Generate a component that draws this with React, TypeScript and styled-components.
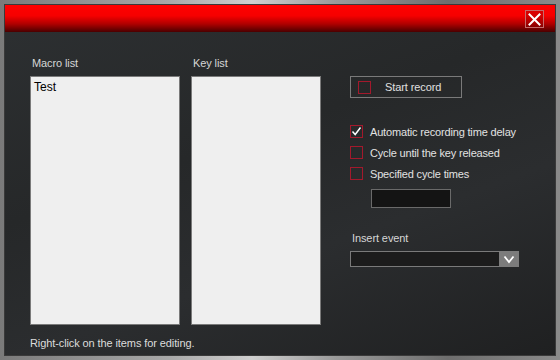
import React from "react";
import styled, { createGlobalStyle } from "styled-components";

const Global = createGlobalStyle`
  html, body { margin: 0; padding: 0; background: #1a1a1a; }
  body { font-family: "Liberation Sans", Arial, sans-serif; }
  *, *::before, *::after { box-sizing: border-box; }
`;

const Frame = styled.div`
  width: 560px;
  height: 360px;
  padding: 4px;
  background: linear-gradient(90deg, #7a7a7a 0%, #a8a8a8 30%, #cfcfcf 45%, #9a9a9a 60%, #6e6e6e 80%, #8a8a8a 100%);
  display: flex;
`;

const Window = styled.div`
  flex: 1;
  display: flex;
  flex-direction: column;
  border: 1px solid #3a3a3a;
  background: linear-gradient(160deg, #2d3032 0%, #262829 40%, #2b2d2f 65%, #1f2021 100%);
  overflow: hidden;
`;

const Header = styled.div`
  height: 27px;
  flex: none;
  display: flex;
  align-items: center;
  justify-content: flex-end;
  padding-right: 11px;
  background: linear-gradient(180deg, #ff0000 0%, #f60000 40%, #b00000 70%, #4a0000 100%);
`;

const CloseButton = styled.div`
  width: 19px;
  height: 18px;
  border: 1px solid #c46a6a;
  background: rgba(120, 0, 0, 0.25);
  display: flex;
  align-items: center;
  justify-content: center;
  margin-top: 1px;
`;

const Body = styled.div`
  flex: 1;
  display: flex;
  flex-direction: column;
  padding: 24px 0 0 25px;
`;

const Main = styled.div`
  display: flex;
`;

const ListColumn = styled.div<{ $w: number; $gap: number }>`
  width: ${(p) => p.$w}px;
  margin-right: ${(p) => p.$gap}px;
  display: flex;
  flex-direction: column;
`;

const Label = styled.div<{ $indent?: number }>`
  color: #d6d6d6;
  font-size: 11px;
  line-height: 14px;
  height: 14px;
  margin-bottom: 6px;
  padding-left: ${(p) => p.$indent ?? 2}px;
  letter-spacing: -0.1px;
`;

const ListBox = styled.div`
  height: 249px;
  background: #efefef;
  border: 1px solid #7a7a7a;
  padding: 3px 3px;
  font-size: 12px;
  line-height: 14px;
  color: #000;
`;

const RightColumn = styled.div`
  display: flex;
  flex-direction: column;
  padding-top: 20px;
`;

const RecordButton = styled.div`
  width: 112px;
  height: 22px;
  border: 1px solid #7a7a7a;
  display: flex;
  align-items: center;
  margin-bottom: 23px;
`;

const Square = styled.span`
  width: 13px;
  height: 13px;
  border: 1px solid #a3192c;
  display: inline-flex;
  align-items: center;
  justify-content: center;
  flex: none;
`;

const RecordText = styled.span`
  color: #e0e0e0;
  font-size: 11px;
  margin-left: 14px;
  letter-spacing: -0.1px;
`;

const CheckRow = styled.div`
  height: 21px;
  display: flex;
  align-items: center;
  gap: 7px;
  color: #e2e2e2;
  font-size: 11px;
  letter-spacing: -0.17px;
`;

const TextInput = styled.div`
  width: 80px;
  height: 19px;
  margin: 5px 0 0 21px;
  background: #141414;
  border: 1px solid #6a6a6a;
`;

const InsertGroup = styled.div`
  margin-top: 23px;
  display: flex;
  flex-direction: column;
`;

const SelectBox = styled.div`
  width: 169px;
  height: 16px;
  border: 1px solid #7a7a7a;
  background: #1c1c1c;
  display: flex;
  justify-content: flex-end;
`;

const SelectArrow = styled.div`
  width: 20px;
  height: 16px;
  margin: -1px -1px 0 0;
  background: #7c7c7c;
  display: flex;
  align-items: center;
  justify-content: center;
`;

const Footer = styled.div`
  margin-top: 11px;
  color: #dcdcdc;
  font-size: 11px;
  line-height: 14px;
  letter-spacing: -0.1px;
`;

export default function App() {
  return (
    <>
      <Global />
      <Frame>
        <Window>
          <Header>
            <CloseButton>
              <svg width="13" height="13" viewBox="0 0 13 13">
                <path d="M1.5 1.5 L11.5 11.5 M11.5 1.5 L1.5 11.5" stroke="#fff" strokeWidth="2" strokeLinecap="square" />
              </svg>
            </CloseButton>
          </Header>
          <Body>
            <Main>
              <ListColumn $w={150} $gap={11}>
                <Label>Macro list</Label>
                <ListBox>Test</ListBox>
              </ListColumn>
              <ListColumn $w={130} $gap={29}>
                <Label>Key list</Label>
                <ListBox />
              </ListColumn>
              <RightColumn>
                <RecordButton>
                  <Square style={{ marginLeft: 7 }} />
                  <RecordText>Start record</RecordText>
                </RecordButton>
                <CheckRow>
                  <Square>
                    <svg width="11" height="11" viewBox="0 0 11 11">
                      <path d="M1.5 5.5 L4.2 8.5 L9.5 1.5" stroke="#fff" strokeWidth="1.5" fill="none" />
                    </svg>
                  </Square>
                  Automatic recording time delay
                </CheckRow>
                <CheckRow>
                  <Square />
                  Cycle until the key released
                </CheckRow>
                <CheckRow>
                  <Square />
                  Specified cycle times
                </CheckRow>
                <TextInput />
                <InsertGroup>
                  <Label>Insert event</Label>
                  <SelectBox>
                    <SelectArrow>
                      <svg width="12" height="9" viewBox="0 0 12 9">
                        <path d="M1.5 1.5 L6 7 L10.5 1.5" stroke="#fff" strokeWidth="1.8" fill="none" />
                      </svg>
                    </SelectArrow>
                  </SelectBox>
                </InsertGroup>
              </RightColumn>
            </Main>
            <Footer>Right-click on the items for editing.</Footer>
          </Body>
        </Window>
      </Frame>
    </>
  );
}
